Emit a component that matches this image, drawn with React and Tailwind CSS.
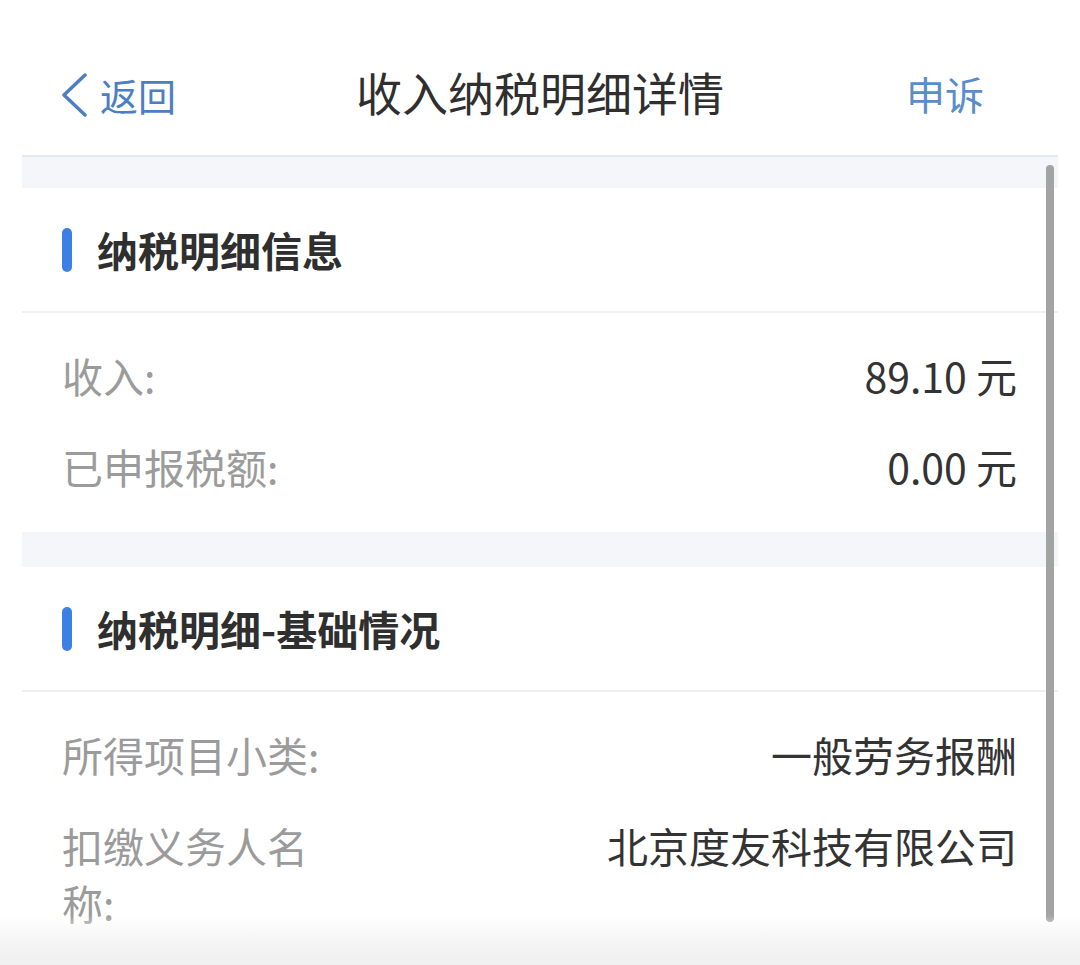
import React from "react";

const font = { fontFamily: '"Noto Sans CJK SC", "Liberation Sans", sans-serif' };

function Row({ label, value }) {
  return (
    <div className="flex items-start justify-between py-[17px] pl-[40px] pr-[41px] text-[41px] leading-[57px]">
      <div className="w-[278px] text-[#9b9b9b]">{label}</div>
      <div className="text-right text-[#333333]">{value}</div>
    </div>
  );
}

function SectionHeader({ title }) {
  return (
    <div className="flex h-[125px] items-center gap-[25px] border-b-2 border-[#efefef] pl-[40px]">
      <div className="h-[44px] w-[10px] rounded-full bg-[#3d7fe2]" />
      <div className="text-[41px] font-bold leading-none text-[#2f2f2f]">{title}</div>
    </div>
  );
}

export default function App() {
  return (
    <div className="relative h-[965px] w-[1080px] overflow-hidden bg-white" style={font}>
      {/* nav bar */}
      <div className="relative flex h-[155px] items-center pt-[27px]">
        <div className="absolute left-[60px] top-[73px] flex items-center gap-[12px] text-[#4d7ec2]">
          <svg width="28" height="44" viewBox="0 0 28 44" fill="none">
            <path d="M25 2 L4 22 L25 42" stroke="#4d7ec2" strokeWidth="3.5" strokeLinecap="round" strokeLinejoin="round" />
          </svg>
          <span className="text-[38px] leading-none">返回</span>
        </div>
        <div className="w-full text-center text-[46px] leading-none text-[#2f2f2f]">收入纳税明细详情</div>
        <div className="absolute right-[96px] top-[74px] text-[39px] leading-none text-[#5a8dc7]">申诉</div>
      </div>

      {/* content */}
      <div className="mx-[22px] border-t-2 border-[#e7e8eb]">
        <div className="h-[31px] bg-[#f5f6f9]" />
        <SectionHeader title="纳税明细信息" />
        <div className="pt-[17px] pb-[20px]">
          <Row label="收入:" value="89.10 元" />
          <Row label="已申报税额:" value="0.00 元" />
        </div>
        <div className="h-[35px] bg-[#f5f6f9]" />
        <SectionHeader title="纳税明细-基础情况" />
        <div className="pt-[17px]">
          <Row label="所得项目小类:" value="一般劳务报酬" />
          <Row label="扣缴义务人名称:" value="北京度友科技有限公司" />
        </div>
      </div>

      {/* scrollbar */}
      <div className="absolute left-[1046px] top-[165px] h-[757px] w-[8px] rounded-full bg-[#a3a3a3]" />

      {/* bottom fade */}
      <div className="absolute bottom-0 left-0 h-[50px] w-full bg-gradient-to-b from-white/0 via-[#f6f6f6] to-[#eeeeee]" />
    </div>
  );
}
